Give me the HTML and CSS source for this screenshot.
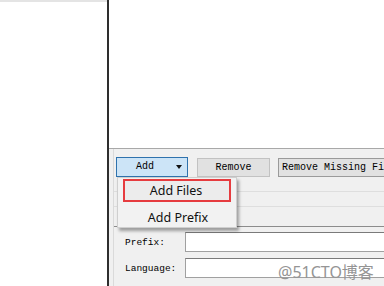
FILE: index.html
```html
<!DOCTYPE html>
<html>
<head>
<meta charset="utf-8">
<link rel="stylesheet" href="styles.css">
</head>
<body>
<div class="app">
  <div class="left"></div>
  <div class="divider"></div>
  <div class="right">
    <div class="top"></div>
    <div class="panel">
      <div class="inner">
        <div class="toolbar">
          <div class="dd">
            <div class="btn add">Add<span class="arrow"></span></div>
            <div class="menu">
              <div class="item sel">Add Files</div>
              <div class="item">Add Prefix</div>
            </div>
          </div>
          <div class="btn remove">Remove</div>
          <div class="btn missing">Remove Missing Files</div>
        </div>
        <div class="list">
          <div class="row"></div>
          <div class="row"></div>
          <div class="row last"></div>
        </div>
        <div class="form">
          <div class="frow"><span class="lbl">Prefix:</span><div class="input"></div></div>
          <div class="frow"><span class="lbl">Language:</span><div class="input"></div></div>
        </div>
        <div class="watermark">@51CTO博客</div>
      </div>
    </div>
  </div>
</div>
</body>
</html>
```
FILE: styles.css
```css
html, body {
  margin: 0;
  padding: 0;
  width: 384px;
  height: 286px;
  overflow: hidden;
  background: #fff;
}
.app {
  display: flex;
  width: 384px;
  height: 286px;
}
.left {
  width: 107px;
  flex: none;
  background: #fff;
  border-top: 2px solid #e4e4e4;
  box-sizing: border-box;
}
.divider {
  width: 2px;
  flex: none;
  background: #2e2e2e;
}
.right {
  flex: 1;
  display: flex;
  flex-direction: column;
  min-width: 0;
}
.top {
  height: 148px;
  background: #fff;
  flex: none;
}
.panel {
  flex: 1;
  background: #f0f0f0;
  border-top: 1px solid #a8a8a8;
  padding-left: 4px;
  overflow: hidden;
}
.inner {
  position: relative;
  height: 100%;
  border-left: 1px solid #dadada;
  padding-top: 8px;
  box-sizing: border-box;
}
.toolbar {
  display: flex;
  gap: 9px;
  padding-left: 2px;
  white-space: nowrap;
  height: 20px;
}
.btn {
  box-sizing: border-box;
  height: 20px;
  font-family: "Liberation Mono", monospace;
  font-size: 10px;
  line-height: 18px;
  color: #000;
  text-align: center;
  flex: none;
}
.dd {
  position: relative;
  flex: none;
}
.add {
  width: 72px;
  background: #cce4f7;
  border: 1px solid #2f72ad;
  text-align: left;
  padding-left: 19px;
  position: relative;
}
.arrow {
  position: absolute;
  left: 59px;
  top: 7px;
  width: 0;
  height: 0;
  border-left: 3.5px solid transparent;
  border-right: 3.5px solid transparent;
  border-top: 4px solid #111;
}
.remove {
  width: 73px;
  height: 19px;
  margin-top: 1px;
  background: #e1e1e1;
  border: 1px solid #c2c2c2;
}
.missing {
  width: 120px;
  height: 19px;
  margin-top: 1px;
  margin-left: -1px;
  background: #e1e1e1;
  border: 1px solid #9a9a9a;
  text-align: left;
  padding-left: 3px;
}
.menu {
  position: absolute;
  left: 1px;
  top: 20px;
  width: 120px;
  height: 51px;
  box-sizing: border-box;
  background: #f2f2f2;
  border: 1px solid #cfcfcf;
  box-shadow: 2px 3px 3px rgba(0,0,0,0.35);
  padding: 1px 0 0 5px;
  z-index: 5;
  font-family: "Noto Sans", sans-serif;
  font-size: 12.5px;
  color: #111;
}
.item {
  width: 108px;
  height: 23px;
  box-sizing: border-box;
  text-align: center;
  padding-right: 2px;
  border: 2px solid transparent;
}
.item.sel {
  border-color: #e63c3f;
  background: #ececec;
  line-height: 19px;
}
.item + .item {
  height: 25px;
  line-height: 27px;
  padding-left: 4px;
}
.list {
  height: 50px;
}
.row {
  height: 15px;
  border-bottom: 1px solid #dedede;
  box-sizing: border-box;
}
.row.last {
  height: 20px;
  border-bottom: 1px solid #8c8c8c;
}
.form {
  padding-top: 5px;
  display: flex;
  flex-direction: column;
  gap: 6px;
}
.frow {
  display: flex;
  align-items: center;
  height: 20px;
}
.lbl {
  width: 60px;
  padding-left: 11px;
  flex: none;
  font-family: "Liberation Mono", monospace;
  font-size: 9.5px;
  color: #000;
}
.input {
  flex: 1;
  height: 20px;
  box-sizing: border-box;
  background: #fff;
  border: 1px solid #a0a0a0;
  border-top-color: #7a7a7a;
  border-right: 0;
}
.watermark {
  position: absolute;
  left: 164px;
  top: 110px;
  font-family: "Noto Sans", "Noto Sans CJK SC", sans-serif;
  font-size: 16px;
  color: #959595;
  white-space: nowrap;
  z-index: 3;
}
```
